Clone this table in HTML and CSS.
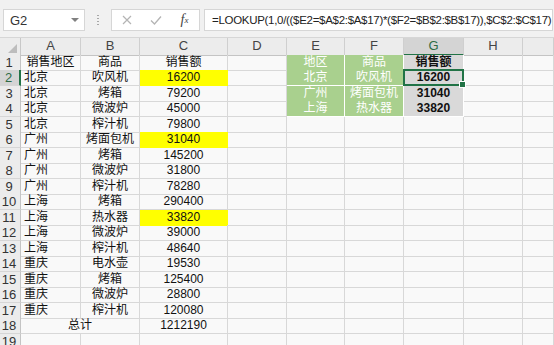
FILE: index.html
```html
<!DOCTYPE html>
<html lang="zh">
<head>
<meta charset="utf-8">
<link rel="stylesheet" href="styles.css">
</head>
<body>
<div class="toolbar">
  <div class="namebox"><span>G2</span><span class="dd"></span></div>
  <div class="grip"></div>
  <div class="btns">
    <span class="slot"><svg width="10" height="10" viewBox="0 0 10 10"><path d="M1 1L9 9M9 1L1 9" stroke="#b4b4b4" stroke-width="1.2"/></svg></span>
    <span class="slot"><svg width="12" height="10" viewBox="0 0 12 10"><path d="M1 5.5L4.5 9L11 1.5" fill="none" stroke="#b4b4b4" stroke-width="1.3"/></svg></span>
    <span class="slot fx"><i>f</i><sub>x</sub></span>
  </div>
  <div class="formula">=LOOKUP(1,0/(($E2=$A$2:$A$17)*($F2=$B$2:$B$17)),$C$2:$C$17)</div>
</div>
<div class="sheet">
  <div class="row hdr">
    <div class="corner"><svg width="9" height="9" viewBox="0 0 9 9"><path d="M9 0V9H0Z" fill="#bdbdbd"/></svg></div>
    <div class="ch">A</div><div class="ch">B</div><div class="ch">C</div><div class="ch">D</div><div class="ch">E</div><div class="ch">F</div><div class="ch sel">G</div><div class="ch">H</div><div class="ch"></div>
  </div>
  <div class="row"><div class="rh">1</div><div class="c">销售地区</div><div class="c">商品</div><div class="c">销售额</div><div class="c"></div><div class="c g">地区</div><div class="c g">商品</div><div class="c s">销售额</div><div class="c"></div><div class="c"></div></div>
  <div class="row"><div class="rh rsel">2</div><div class="c l">北京</div><div class="c">吹风机</div><div class="c y">16200</div><div class="c"></div><div class="c g">北京</div><div class="c g">吹风机</div><div class="c s active">16200</div><div class="c"></div><div class="c"></div></div>
  <div class="row"><div class="rh">3</div><div class="c l">北京</div><div class="c">烤箱</div><div class="c">79200</div><div class="c"></div><div class="c g">广州</div><div class="c g">烤面包机</div><div class="c s">31040</div><div class="c"></div><div class="c"></div></div>
  <div class="row"><div class="rh">4</div><div class="c l">北京</div><div class="c">微波炉</div><div class="c">45000</div><div class="c"></div><div class="c g">上海</div><div class="c g">热水器</div><div class="c s">33820</div><div class="c"></div><div class="c"></div></div>
  <div class="row"><div class="rh">5</div><div class="c l">北京</div><div class="c">榨汁机</div><div class="c">79800</div><div class="c"></div><div class="c"></div><div class="c"></div><div class="c"></div><div class="c"></div><div class="c"></div></div>
  <div class="row"><div class="rh">6</div><div class="c l">广州</div><div class="c">烤面包机</div><div class="c y">31040</div><div class="c"></div><div class="c"></div><div class="c"></div><div class="c"></div><div class="c"></div><div class="c"></div></div>
  <div class="row"><div class="rh">7</div><div class="c l">广州</div><div class="c">烤箱</div><div class="c">145200</div><div class="c"></div><div class="c"></div><div class="c"></div><div class="c"></div><div class="c"></div><div class="c"></div></div>
  <div class="row"><div class="rh">8</div><div class="c l">广州</div><div class="c">微波炉</div><div class="c">31800</div><div class="c"></div><div class="c"></div><div class="c"></div><div class="c"></div><div class="c"></div><div class="c"></div></div>
  <div class="row"><div class="rh">9</div><div class="c l">广州</div><div class="c">榨汁机</div><div class="c">78280</div><div class="c"></div><div class="c"></div><div class="c"></div><div class="c"></div><div class="c"></div><div class="c"></div></div>
  <div class="row"><div class="rh">10</div><div class="c l">上海</div><div class="c">烤箱</div><div class="c">290400</div><div class="c"></div><div class="c"></div><div class="c"></div><div class="c"></div><div class="c"></div><div class="c"></div></div>
  <div class="row"><div class="rh">11</div><div class="c l">上海</div><div class="c">热水器</div><div class="c y">33820</div><div class="c"></div><div class="c"></div><div class="c"></div><div class="c"></div><div class="c"></div><div class="c"></div></div>
  <div class="row"><div class="rh">12</div><div class="c l">上海</div><div class="c">微波炉</div><div class="c">39000</div><div class="c"></div><div class="c"></div><div class="c"></div><div class="c"></div><div class="c"></div><div class="c"></div></div>
  <div class="row"><div class="rh">13</div><div class="c l">上海</div><div class="c">榨汁机</div><div class="c">48640</div><div class="c"></div><div class="c"></div><div class="c"></div><div class="c"></div><div class="c"></div><div class="c"></div></div>
  <div class="row"><div class="rh">14</div><div class="c l">重庆</div><div class="c">电水壶</div><div class="c">19530</div><div class="c"></div><div class="c"></div><div class="c"></div><div class="c"></div><div class="c"></div><div class="c"></div></div>
  <div class="row"><div class="rh">15</div><div class="c l">重庆</div><div class="c">烤箱</div><div class="c">125400</div><div class="c"></div><div class="c"></div><div class="c"></div><div class="c"></div><div class="c"></div><div class="c"></div></div>
  <div class="row"><div class="rh">16</div><div class="c l">重庆</div><div class="c">微波炉</div><div class="c">28800</div><div class="c"></div><div class="c"></div><div class="c"></div><div class="c"></div><div class="c"></div><div class="c"></div></div>
  <div class="row"><div class="rh">17</div><div class="c l">重庆</div><div class="c">榨汁机</div><div class="c">120080</div><div class="c"></div><div class="c"></div><div class="c"></div><div class="c"></div><div class="c"></div><div class="c"></div></div>
  <div class="row"><div class="rh">18</div><div class="c span2">总计</div><div class="c">1212190</div><div class="c"></div><div class="c"></div><div class="c"></div><div class="c"></div><div class="c"></div><div class="c"></div></div>
  <div class="row"><div class="rh">19</div><div class="c"></div><div class="c"></div><div class="c"></div><div class="c"></div><div class="c"></div><div class="c"></div><div class="c"></div><div class="c"></div><div class="c"></div></div>
</div>
</body>
</html>
```
FILE: styles.css
```css
* { box-sizing: border-box; margin: 0; padding: 0; }
body {
  margin: 0;
  width: 554px;
  height: 345px;
  overflow: hidden;
  background: #f9f9f9;
  font-family: "Liberation Sans", "Noto Sans CJK SC", sans-serif;
  font-size: 12px;
  color: #111;
}
.toolbar {
  height: 38px;
  background: #f1f1f1;
  border-bottom: 1px solid #d6d6d6;
  display: flex;
  align-items: flex-start;
  padding: 9px 0 0 3px;
}
.namebox {
  width: 82px;
  height: 22px;
  background: #fff;
  border: 1px solid #d6d6d6;
  display: flex;
  align-items: center;
  justify-content: space-between;
  padding: 0 5px 0 6px;
  font-size: 13px;
  color: #333;
}
.dd {
  width: 0;
  height: 0;
  border-left: 4px solid transparent;
  border-right: 4px solid transparent;
  border-top: 4px solid #808080;
}
.grip {
  width: 2px;
  height: 11px;
  margin: 5px 12px 0 12px;
  background-image: radial-gradient(circle, #a8a8a8 0.8px, transparent 1.1px);
  background-size: 2px 3px;
}
.btns {
  width: 89px;
  height: 22px;
  background: #fff;
  border: 1px solid #d6d6d6;
  display: flex;
  align-items: center;
}
.slot {
  width: 29px;
  height: 20px;
  display: flex;
  align-items: center;
  justify-content: center;
}
.fx {
  font-family: "Liberation Serif", serif;
  font-size: 14px;
  color: #444;
}
.fx sub {
  font-size: 9px;
  font-style: italic;
  vertical-align: -2px;
}
.formula {
  flex: 1;
  height: 22px;
  margin: 0 1px 0 4px;
  background: #fff;
  border: 1px solid #d6d6d6;
  padding-left: 7px;
  line-height: 20px;
  font-size: 11.5px;
  letter-spacing: -0.3px;
  color: #222;
  white-space: nowrap;
  overflow: hidden;
}
.row {
  display: grid;
  grid-template-columns: 21px 60px 59px 88px 59px 58px 59px 60px 59px 31px;
  height: 15.5px;
  line-height: 15px;
}
.hdr {
  height: 16.5px;
  line-height: 16px;
}
.corner {
  background: #ececec;
  border-right: 1px solid #c8c8c8;
  border-bottom: 1px solid #c8c8c8;
  display: flex;
  align-items: flex-end;
  justify-content: flex-end;
  padding: 0 3px 2px 0;
}
.ch {
  background: #ececec;
  border-right: 1px solid #cfcfcf;
  border-bottom: 1px solid #c4c4c4;
  text-align: center;
  font-size: 13px;
  color: #444;
}
.ch.sel {
  background: #d4d4d4;
  border-bottom: 2px solid #217346;
  color: #2e6b45;
}
.rh {
  background: #ececec;
  border-right: 1px solid #c4c4c4;
  border-bottom: 1px solid #d6d6d6;
  text-align: center;
  padding-right: 2px;
  font-size: 13px;
  color: #333;
}
.rh.rsel {
  background: #d4d4d4;
  border-right: 2px solid #217346;
  color: #2e6b45;
}
.c {
  border-right: 1px solid #d8d8d8;
  border-bottom: 1px solid #d8d8d8;
  text-align: center;
  white-space: nowrap;
  overflow: visible;
}
.c.l {
  text-align: left;
  padding-left: 3px;
}
.c.span2 {
  grid-column: span 2;
}
.c.y {
  background: #ffff00;
  border-color: #ffff00;
}
.c.g {
  background: #a9d08e;
  color: #fff;
  border-color: #ffffff;
}
.c.s {
  background: #d9d9d9;
  border-color: #ffffff;
  font-weight: bold;
}
.c.active {
  position: relative;
}
.c.active::after {
  content: "";
  position: absolute;
  left: -1px;
  top: -1px;
  right: -1px;
  bottom: -1px;
  border: 2px solid #217346;
}
.c.active::before {
  content: "";
  position: absolute;
  right: -3px;
  bottom: -3px;
  width: 5px;
  height: 5px;
  background: #217346;
  border: 1px solid #fff;
  z-index: 2;
}
```
